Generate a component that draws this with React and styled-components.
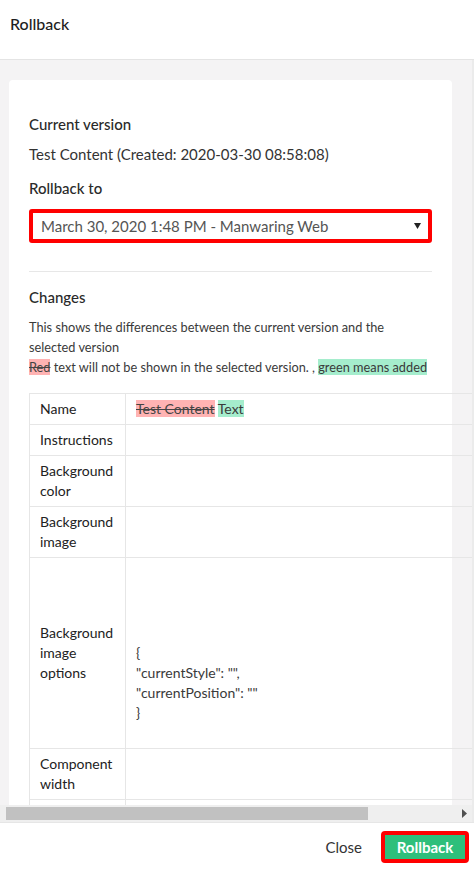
import React from "react";
import styled, { createGlobalStyle } from "styled-components";

const GlobalStyle = createGlobalStyle`
	html, body {
		margin: 0;
		padding: 0;
	}
	body {
		font-family: Lato, "Noto Sans", sans-serif;
		color: #222;
		background: #fff;
	}
	* {
		box-sizing: border-box;
	}
`;

const rows = [
	{ label: "Name", diff: true },
	{ label: "Instructions" },
	{ label: "Background color" },
	{ label: "Background image" },
	{
		label: "Background image options",
		value: '{\n"currentStyle": "",\n"currentPosition": ""\n}',
		tall: true,
	},
	{ label: "Component width" },
	{ label: "" },
];

export default function App() {
	return (
		<Modal>
			<GlobalStyle />
			<Header>Rollback</Header>
			<Body>
				<Viewport>
					<Card>
						<Heading>Current version</Heading>
						<Text>Test Content (Created: 2020-03-30 08:58:08)</Text>
						<Heading $top={14}>Rollback to</Heading>
						<SelectBox>
							<span>March 30, 2020 1:48 PM - Manwaring Web</span>
							<svg width="7" height="6" viewBox="0 0 7 6">
								<polygon points="0,0 7,0 3.5,6" fill="#222" />
							</svg>
						</SelectBox>
						<Divider />
						<Heading>Changes</Heading>
						<Note>
							This shows the differences between the current version and the
							selected version
							<br />
							<Removed>Red</Removed> text will not be shown in the selected
							version. , <Added>green means added</Added>
						</Note>
						<DiffTable>
							<tbody>
								{rows.map((row, i) => (
									<tr key={i}>
										<LabelCell $tall={row.tall}>{row.label}</LabelCell>
										<ValueCell $tall={row.tall}>
											{row.diff ? (
												<>
													<Removed>Test Content</Removed> <Added>Text</Added>
												</>
											) : (
												row.value
											)}
										</ValueCell>
									</tr>
								))}
							</tbody>
						</DiffTable>
					</Card>
				</Viewport>
				<ScrollBar>
					<Thumb />
					<ScrollArrow>
						<svg width="5" height="9" viewBox="0 0 5 9">
							<polygon points="0,0 5,4.5 0,9" fill="#505050" />
						</svg>
					</ScrollArrow>
				</ScrollBar>
			</Body>
			<Footer>
				<CloseButton>Close</CloseButton>
				<PrimaryButton>Rollback</PrimaryButton>
			</Footer>
		</Modal>
	);
}

const Modal = styled.div`
	width: 474px;
	height: 870px;
	display: flex;
	flex-direction: column;
	overflow: hidden;
`;

const Header = styled.div`
	height: 60px;
	flex-shrink: 0;
	padding: 14px 10px 0;
	font-size: 16px;
	line-height: 20px;
	font-weight: 500;
	color: #1e1e1e;
	border-bottom: 1px solid #e4e4e4;
`;

const Body = styled.div`
	flex: 1;
	min-height: 0;
	display: flex;
	flex-direction: column;
	background: #f4f3f4;
	border-right: 2px solid #ebebeb;
`;

const Viewport = styled.div`
	flex: 1;
	min-height: 0;
	overflow: hidden;
	padding-top: 20px;
`;

const ScrollBar = styled.div`
	height: 17px;
	flex-shrink: 0;
	display: flex;
	align-items: center;
	justify-content: space-between;
	padding-left: 6px;
	background: #efefef;
`;

const Thumb = styled.div`
	width: 362px;
	height: 13px;
	background: #c1c1c1;
`;

const ScrollArrow = styled.div`
	width: 15px;
	height: 17px;
	display: flex;
	align-items: center;
	justify-content: center;
`;

const Card = styled.div`
	width: 443px;
	margin-left: 9px;
	background: #fff;
	border-radius: 4px;
	padding: 34px 20px 20px;
`;

const Heading = styled.div`
	margin-top: ${(p) => p.$top ?? 0}px;
	font-size: 15px;
	line-height: 20px;
	font-weight: 500;
	color: #2a2a2a;
`;

const Text = styled.div`
	margin-top: 10px;
	font-size: 15px;
	line-height: 20px;
	color: #333;
`;

const SelectBox = styled.div`
	margin-top: 11px;
	height: 34px;
	border: 4px solid #f00;
	border-radius: 3px;
	display: flex;
	align-items: center;
	justify-content: space-between;
	padding: 0 7px 0 8px;
	font-size: 15px;
	color: #555;
`;

const Divider = styled.hr`
	margin: 28px 0 15px;
	border: none;
	border-top: 1px solid #e7e7e7;
`;

const Note = styled.p`
	margin: 10px 0 16px;
	font-size: 12.75px;
	line-height: 20px;
	color: #3a3a3a;
`;

const Removed = styled.del`
	background: #ffb3b3;
	color: #444;
`;

const Added = styled.ins`
	background: #a5edcd;
	text-decoration: none;
`;

const DiffTable = styled.table`
	width: 600px;
	border-collapse: collapse;
	font-size: 14px;
	line-height: 20px;
	color: #222;
`;

const LabelCell = styled.td`
	width: 96px;
	height: ${(p) => (p.$tall ? 191 : 31)}px;
	padding: 5px 10px;
	border: 1px solid #e6e6e6;
	vertical-align: middle;
`;

const ValueCell = styled.td`
	padding: ${(p) => (p.$tall ? "5px 10px 25px" : "5px 10px")};
	border: 1px solid #e6e6e6;
	vertical-align: ${(p) => (p.$tall ? "bottom" : "middle")};
	white-space: pre-line;
	color: #3a3a3a;
`;

const Footer = styled.div`
	height: 48px;
	flex-shrink: 0;
	border-top: 1px solid #e6e6e6;
	display: flex;
	align-items: center;
	justify-content: flex-end;
	gap: 19px;
	padding-right: 5px;
`;

const CloseButton = styled.button`
	border: none;
	background: none;
	padding: 0;
	font-family: inherit;
	font-size: 15px;
	color: #333;
`;

const PrimaryButton = styled.button`
	height: 32px;
	width: 88px;
	border: 4px solid #f00;
	border-radius: 4px;
	background: #2ebf7b;
	color: #fff;
	font-family: inherit;
	font-weight: 700;
	font-size: 15px;
	padding: 0;
`;
